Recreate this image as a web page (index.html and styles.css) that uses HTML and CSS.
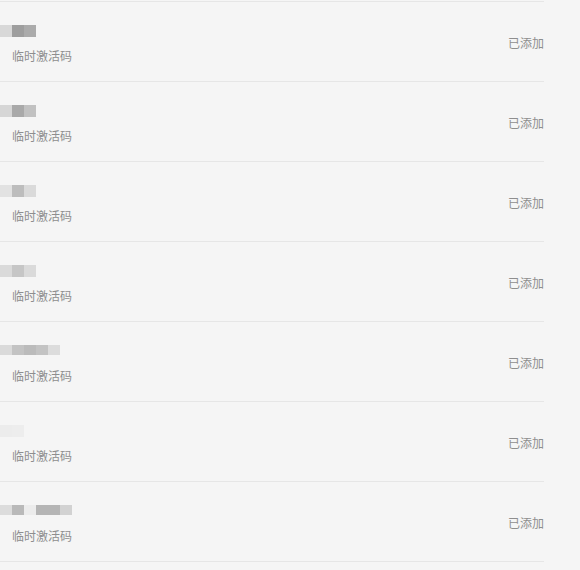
FILE: index.html
```html
<!DOCTYPE html>
<html lang="zh-CN">
<head>
    <meta charset="UTF-8">
    <meta name="viewport" content="width=device-width, initial-scale=1.0">
    <title>激活码</title>
    <link rel="stylesheet" href="styles.css">
</head>
<body>

<ul class="code-list">
    <li class="code-item">
        <div class="code-info">
            <div class="code-name">
                <span class="px" style="background:#d8d8d8"></span><span class="px" style="background:#9e9e9e"></span><span class="px" style="background:#ababab"></span>
            </div>
            <div class="code-type">临时激活码</div>
        </div>
        <span class="code-status">已添加</span>
    </li>
    <li class="code-item">
        <div class="code-info">
            <div class="code-name">
                <span class="px" style="background:#d6d6d6"></span><span class="px" style="background:#a9a9a9"></span><span class="px" style="background:#c1c1c1"></span>
            </div>
            <div class="code-type">临时激活码</div>
        </div>
        <span class="code-status">已添加</span>
    </li>
    <li class="code-item">
        <div class="code-info">
            <div class="code-name">
                <span class="px" style="background:#e2e2e2"></span><span class="px" style="background:#bdbdbd"></span><span class="px" style="background:#dadada"></span>
            </div>
            <div class="code-type">临时激活码</div>
        </div>
        <span class="code-status">已添加</span>
    </li>
    <li class="code-item">
        <div class="code-info">
            <div class="code-name">
                <span class="px" style="background:#dadada"></span><span class="px" style="background:#c6c6c6"></span><span class="px" style="background:#dadada"></span>
            </div>
            <div class="code-type">临时激活码</div>
        </div>
        <span class="code-status">已添加</span>
    </li>
    <li class="code-item">
        <div class="code-info">
            <div class="code-name thin">
                <span class="px" style="background:#dadada"></span><span class="px" style="background:#c3c3c3"></span><span class="px" style="background:#bbbbbb"></span><span class="px" style="background:#c3c3c3"></span><span class="px" style="background:#dcdcdc"></span>
            </div>
            <div class="code-type">临时激活码</div>
        </div>
        <span class="code-status">已添加</span>
    </li>
    <li class="code-item">
        <div class="code-info">
            <div class="code-name">
                <span class="px" style="background:#ececec"></span><span class="px" style="background:#ededed"></span>
            </div>
            <div class="code-type">临时激活码</div>
        </div>
        <span class="code-status">已添加</span>
    </li>
    <li class="code-item">
        <div class="code-info">
            <div class="code-name thin">
                <span class="px" style="background:#dcdcdc"></span><span class="px" style="background:#b9b9b9"></span><span class="px" style="background:#ececec"></span><span class="px" style="background:#b5b5b5"></span><span class="px" style="background:#b5b5b5"></span><span class="px" style="background:#d2d2d2"></span>
            </div>
            <div class="code-type">临时激活码</div>
        </div>
        <span class="code-status">已添加</span>
    </li>
</ul>

</body>
</html>
```

FILE: styles.css
```css
body {
    font-family: "Noto Sans CJK SC", "Noto Sans", sans-serif;
    background-color: #f5f5f5;
    margin: 0;
    padding: 0;
}
.code-list {
    list-style: none;
    margin: 0;
    padding: 1px 0 0;
    width: 544px;
    border-bottom: 1px solid #e6e6e6;
}
.code-item {
    display: flex;
    align-items: center;
    justify-content: space-between;
    height: 79px;
    border-top: 1px solid #e6e6e6;
}
.code-info {
    display: flex;
    flex-direction: column;
    gap: 11px;
    padding-left: 12px;
    margin-top: 5px;
}
.code-name {
    display: flex;
    height: 12px;
    margin-left: -12px;
}
.code-name.thin {
    height: 10px;
    margin-bottom: 2px;
}
.px {
    width: 12px;
    height: 100%;
}
.code-type {
    font-size: 12px;
    line-height: 16px;
    color: #8e8e8e;
}
.code-status {
    font-size: 12px;
    line-height: 16px;
    color: #8e8e8e;
    margin-top: 2px;
}
```
